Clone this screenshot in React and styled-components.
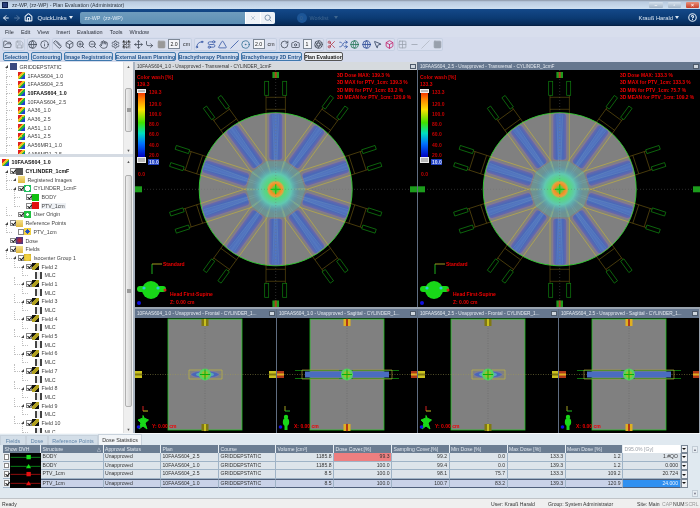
import React from "react";
import styled, { createGlobalStyle } from "styled-components";
import {
  ArrowLeft, ArrowRight, Home, Search, X, HelpCircle, FolderOpen, Save, Info, ZoomIn, ZoomOut, Hand, Settings,
  QrCode, Move, CornerDownRight, Square, Spline, Route, Triangle, Slash, CircleDot, RotateCw, Camera, Ruler,
  Scissors, Shuffle, Globe, Aperture, MousePointer2, Box, Grid2x2, Minus,
} from "lucide-react";

const Global = createGlobalStyle`
  html, body { margin: 0; padding: 0; background: #d5dbec; overflow: hidden; }
  * { box-sizing: border-box; }
`;

const Page = styled.div`
  width: 700px; height: 508px; display: flex; flex-direction: column; overflow: hidden;
  font-family: "Liberation Sans", Arial, sans-serif; font-size: 5.4px; color: #222; background: #d5dbec;
  filter: blur(0.25px);
`;

/* ---------- window chrome ---------- */
const TitleBar = styled.div`
  height: 9px; flex: none; display: flex; align-items: center; padding-left: 2px; gap: 4px;
  background: linear-gradient(#8994a4 0, #b9cbe0 20%, #cfe0f1 100%); color: #2c3540; font-size: 5.2px;
`;
const AppGlyph = styled.span`
  width: 6px; height: 6px; background: #2b3f7a; border: 1px solid #10204a; flex: none;
`;
const TitleText = styled.span` flex: 1; `;
const WinButton = styled.span`
  width: ${p => p.$w}px; height: 6px; margin-right: 1px; border-radius: 1px; display: flex; align-items: center; justify-content: center;
  background: ${p => (p.$close ? "linear-gradient(#e8907a,#c8402a)" : "linear-gradient(#d6e2ee,#a3b5c8)")};
  color: #fff; font-size: 5px; font-weight: bold;
`;
const NavBar = styled.div`
  height: 17px; flex: none; display: flex; align-items: center; color: #e6eef8; font-size: 6px;
  background: linear-gradient(#14498a 0, #0b3a72 55%, #062a58 90%, #041c3e 100%);
`;
const NavIcon = styled.span`
  width: 11.5px; display: flex; justify-content: center; opacity: ${p => p.$dim ? 0.35 : 1};
`;
const QuickLinks = styled.span` margin-left: 3px; width: 42px; white-space: nowrap; `;
const Caret = styled.span`
  display: inline-block; width: 0; height: 0; margin-left: 2px; vertical-align: 1px;
  border-left: 2.5px solid transparent; border-right: 2.5px solid transparent; border-top: 3px solid currentColor;
`;
const SearchField = styled.div`
  width: 195px; height: 12px; display: flex; align-items: center; border-radius: 2px; overflow: hidden;
  background: linear-gradient(#6f9cbd,#5d8fb4); color: #dfeaf3; padding-left: 5px;
`;
const SearchText = styled.span` flex: 1; font-size: 5.4px; white-space: pre; `;
const SearchButton = styled.span`
  width: 15px; height: 12px; background: #eef2f7; display: flex; align-items: center; justify-content: center;
  color: #8298b0; border-left: 1px solid #fff;
`;
const Worklist = styled.div`
  margin-left: 22px; display: flex; align-items: center; gap: 3px; color: #3f668f; flex: 1; font-size: 5.4px;
`;
const Badge = styled.span`
  width: 10px; height: 10px; border-radius: 50%; background: #1c5596; display: flex; align-items: center; justify-content: center; font-size: 5px;
`;
const UserName = styled.span` color: #dbe6f2; font-size: 5.8px; margin-right: 9px; `;
const HelpSlot = styled.span` margin-right: 3px; display: flex; color: #dbe6f2; `;

const MenuBar = styled.div`
  height: 11px; flex: none; display: flex; align-items: center; padding-left: 5px; gap: 7px; background: #d8deed; font-size: 5.5px; color: #2a2f3a;
`;
const ToolBar = styled.div`
  height: 14px; flex: none; display: flex; align-items: center; padding-left: 2px; gap: 2px; background: #d5dbec;
`;
const ToolGroup = styled.div`
  display: flex; align-items: center; height: 13px; border-radius: 2px;
  background: #d9dfef; box-shadow: inset 0 0 0 1px #c6d0e2;
`;
const Tool = styled.span`
  width: 11.5px; display: flex; justify-content: center; color: #3b4350; flex: none;
`;
const ToolInput = styled.span`
  width: ${p => p.$w}px; height: 10px; margin: 0 1px; background: #f4f5f8; border: 1px solid #7d8795; font-size: 5.2px; text-align: center; line-height: 8px; flex: none;
`;
const ToolUnit = styled.span` width: 11px; text-align: center; font-size: 5.2px; flex: none; `;
const TabBar = styled.div`
  height: 11px; flex: none; display: flex; align-items: center; padding-left: 3px; gap: 2px; background: #d5dbec;
`;
const ModeTab = styled.span`
  width: ${p => p.$w}px; height: 9px; display: flex; align-items: center; justify-content: center; white-space: nowrap; border-radius: 2px;
  font-size: 5.2px; font-weight: bold; overflow: hidden;
  color: ${p => p.$on ? "#222" : "#27578f"}; border: 1px solid ${p => p.$on ? "#555" : "#3e78ad"};
  background: ${p => p.$on ? "#eef0f3" : "#cfdcee"};
`;

/* ---------- main ---------- */
const Main = styled.div` height: 371px; flex: none; display: flex; background: #aab4c0; `;
const LeftColumn = styled.div`
  width: 133px; margin-right: 2px; flex: none; display: flex; flex-direction: column; gap: 3px; background: #d5dbe3;
`;
const TreePane = styled.div`
  height: ${p => p.$h}px; flex: none; display: flex; background: #fff; overflow: hidden;
`;
const TreeList = styled.div` flex: 1; padding-top: ${p => p.$top}px; overflow: hidden; min-width: 0; `;
const Row = styled.div`
  height: 8.7px; display: flex; align-items: center; position: relative; white-space: nowrap; font-size: 5.3px;
  padding-left: ${p => 2 + p.$level * 8}px;
  font-weight: ${p => p.$bold ? "bold" : "normal"};
  color: ${p => p.$bold ? "#111" : "#444"};
  &::before {
    content: ${p => p.$level > 0 ? '""' : "none"}; position: absolute; left: ${p => p.$level * 8 - 2}px; top: -3px; width: 5px; height: 7.5px;
    border-left: 1px dotted #c0c0c0; border-bottom: 1px dotted #c0c0c0;
  }
`;
const Exp = styled.span`
  width: 8px; flex: none; display: flex; justify-content: center; position: relative; z-index: 1;
  &::after {
    content: ${p => p.$show ? '""' : "none"}; width: 0; height: 0; border-style: solid;
    border-width: 0 0 3px 3px; border-color: transparent transparent #444 transparent;
  }
`;
const Check = styled.span`
  width: 5.5px; height: 5.5px; margin-right: 0.5px; flex: none; border: 1px solid #888; background: #fff; position: relative; z-index: 1;
  &::after {
    content: ${p => p.$on ? '""' : "none"}; position: absolute; left: 1px; top: -0.5px; width: 2px; height: 3.4px;
    border-right: 1px solid #111; border-bottom: 1px solid #111; transform: rotate(40deg);
  }
`;
const TreeIcon = styled.span`
  width: 7px; height: 7px; margin: 0 0.5px 0 ${p => p.$nudge || 0}px; flex: none; display: block; position: relative; z-index: 1;
  background: ${p => p.$bg};
`;
const Label = styled.span`
  margin-left: 1px; padding: 0 1px;
  background: ${p => p.$hl ? "#eef1f5" : "transparent"};
`;
const ScrollTrack = styled.div`
  width: 10px; flex: none; background: #efefef; border-left: 1px solid #e0e0e0; display: flex; flex-direction: column; align-items: center;
`;
const ScrollArrow = styled.span`
  height: 8px; flex: none; display: flex; align-items: center; justify-content: center; font-size: 4px; color: #555;
`;
const ScrollSpace = styled.div`
  flex: 1; width: 100%; display: flex; flex-direction: column; padding: ${p => p.$pad};
`;
const Thumb = styled.div`
  flex: 1; border: 1px solid #b0b0b0; border-radius: 2px; background: linear-gradient(90deg,#eee,#d4d4d4); display: flex; align-items: center; justify-content: center;
  &::after { content: ""; width: 4px; height: 4px; background: #9a9a9a; }
`;

/* ---------- viewports ---------- */
const Viewer = styled.div`
  width: 565px; flex: none; display: grid; grid-template-columns: 282px 283px; grid-template-rows: 245px 124px; row-gap: 2px; background: #9aa4b0;
`;
const Split = styled.div` display: grid; grid-template-columns: 141px 141px; grid-column: span 1; `;
const Viewport = styled.div`
  display: flex; flex-direction: column; overflow: hidden; min-width: 0; background: #000;
  border-left: ${p => p.$edge ? "1px solid #5f6d80" : "none"};
`;
const ViewHeader = styled.div`
  height: ${p => p.$h}px; flex: none; display: flex; align-items: center; padding: 0 1px 0 2px; white-space: nowrap; font-size: 4.7px;
  background: ${p => p.$on ? "#d6dade" : "#66778f"}; color: ${p => p.$on ? "#333" : "#e4e9f0"};
`;
const ViewTitle = styled.span` flex: 1; overflow: hidden; `;
const ViewMenu = styled.span`
  width: 6px; height: 5px; flex: none; background: #cfd6de; border: 1px solid #4e5a6a;
`;
const Canvas = styled.div` flex: 1; position: relative; overflow: hidden; background: #000; `;
const Drawing = styled.svg` position: absolute; left: 0; top: 0; display: block; `;
const Red = styled.div`
  position: absolute; left: ${p => p.$l ?? 0}px; top: ${p => p.$t ?? 0}px; color: #f00000; font-weight: bold; font-size: 5px; line-height: 7px; white-space: nowrap;
`;
const DoseLines = styled.div`
  position: absolute; left: 202px; top: 2px; color: #f40000; font-weight: bold; font-size: 4.9px; line-height: 7.4px; white-space: nowrap;
`;
const WashPanel = styled.div`
  position: absolute; left: 2px; top: 3.5px; color: #e00000; font-weight: bold; font-size: 5px; line-height: 7px; white-space: nowrap;
`;
const WashScale = styled.div` display: flex; margin-top: 1.5px; `;
const WashBar = styled.div`
  width: 7px; height: 66px; margin: 2px 4px 0 1px; position: relative;
  background: linear-gradient(#f02000 0, #ff8000 12%, #ffe000 28%, #40e000 48%, #00e0c0 64%, #0070ff 80%, #0000c0 100%);
`;
const WashHandle = styled.span`
  position: absolute; left: -1px; width: 9px; height: ${p => p.$h}px; background: #b8b8b8; border: 1px solid #eee;
  ${p => p.$top ? "top: -2px;" : "bottom: -6px;"}
`;
const WashLabels = styled.div` display: flex; flex-direction: column; `;
const WashLabel = styled.span`
  height: ${p => p.$h}px; line-height: 7px; color: #c80000;
`;
const WashLow = styled.span`
  width: 11px; height: 6px; line-height: 6px; margin: 1px 0 0 -1px; background: #2040c0; color: #d8e0ff; padding-left: 1px;
`;
const WashZero = styled.div` margin-top: 6px; margin-left: 1px; color: #c80000; `;

/* ---------- bottom ---------- */
const Bottom = styled.div`
  height: 65px; flex: none; display: flex; flex-direction: column; background: #e0e9f0; border-top: 1px solid #f6f8fa;
`;
const LowerTabs = styled.div` height: 11px; flex: none; display: flex; align-items: flex-end; `;
const LowerTab = styled.span`
  width: ${p => p.$w}px; height: ${p => p.$on ? 11 : 10}px; display: flex; align-items: center; justify-content: center; font-size: 5.4px; white-space: nowrap;
  color: ${p => p.$on ? "#333" : "#5f84a8"}; background: ${p => p.$on ? "#f2f5f8" : "#d3deE8"}; border: 1px solid #c8d2dc; border-bottom: none;
`;
const TableZone = styled.div` flex: 1; display: flex; padding-left: 3px; min-height: 0; `;
const Table = styled.div`
  width: 684px; flex: none; align-self: flex-start; display: grid;
  grid-template-columns: 7px 31px 62.5px 57.5px 58px 57px 58px 58px 57.5px 58px 58px 57.5px 57.5px 7px;
  grid-template-rows: 8px repeat(4, 8.7px);
`;
const Head = styled.div`
  grid-column: span ${p => p.$span || 1}; background: ${p => p.$light ? "#fff" : "#6b7d92"}; color: ${p => p.$light ? "#9aa0a8" : "#dfe6ee"};
  border-right: 1px solid #e6edf3; padding: 0 1.5px; font-size: 5.1px; line-height: 8px; white-space: nowrap; overflow: hidden;
  display: flex; justify-content: space-between; align-items: center;
`;
const Cell = styled.div`
  background: ${p => p.$bg || (p.$sel ? "#c9d2e8" : "#dde4ea")}; color: ${p => p.$fg || "#333"};
  border-right: 1px solid #9fb3c6; border-bottom: ${p => p.$sel ? "1px solid #4f5f7a" : "1px solid #9fb3c6"};
  border-top: ${p => p.$sel ? "1px solid #4f5f7a" : "none"};
  padding: 0 1.5px; font-size: 5.1px; line-height: 7.5px; white-space: nowrap; overflow: hidden; text-align: ${p => p.$right ? "right" : "left"};
`;
const BoxCell = styled.div`
  background: #e8edf2; display: flex; align-items: center; justify-content: center; border-bottom: 1px solid #9fb3c6;
`;
const DvhCell = styled.div` background: #000; display: flex; `;
const DropCell = styled.div`
  background: #f0f2f5; border: 1px solid #7a8796; display: flex; align-items: center; justify-content: center;
  &::after { content: ""; width: 0; height: 0; border-left: 2px solid transparent; border-right: 2px solid transparent; border-top: 2px solid #111; }
`;
const SideScroll = styled.div`
  width: 10px; margin-left: 3px; flex: none; display: flex; flex-direction: column; justify-content: space-between; align-items: center; padding: 1px 0 1px;
`;
const SideArrow = styled.span`
  width: 6px; height: 7px; border: 1px solid #c3cdd6; background: #e8eef3; font-size: 4px; color: #778; display: flex; align-items: center; justify-content: center;
`;
const StatusBar = styled.div`
  height: 10px; flex: none; display: flex; align-items: center; padding-left: 2px; background: #efefef; border-top: 1px solid #c0c4c8; font-size: 5.1px; color: #333;
`;
const StatusItem = styled.span`
  width: ${p => p.$w}px; flex: none; white-space: nowrap; color: ${p => p.$dim ? "#999" : "#333"};
`;

/* ---------- drawings ---------- */
const ANGLES = [0, 36, 72, 108, 144, 180, 216, 252, 288, 324];

function Transversal({ cx, cy, id }) {
  return (
    <Drawing width="283" height="237" viewBox="0 0 283 237">
      <defs>
        <radialGradient id={`hot${id}`}>
          <stop offset="0" stopColor="#30d040" />
          <stop offset="0.13" stopColor="#80c040" />
          <stop offset="0.2" stopColor="#f09020" />
          <stop offset="0.3" stopColor="#e8a040" />
          <stop offset="0.38" stopColor="#58d878" />
          <stop offset="0.65" stopColor="#60c8b0" />
          <stop offset="1" stopColor="#5090c0" stopOpacity="0" />
        </radialGradient>
        <linearGradient id={`beam${id}`} x1="0" x2="1" y1="0" y2="0">
          <stop offset="0" stopColor="#6a68a8" />
          <stop offset="0.25" stopColor="#4a68b8" />
          <stop offset="0.5" stopColor="#5478c0" />
          <stop offset="0.75" stopColor="#4a68b8" />
          <stop offset="1" stopColor="#6a68a8" />
        </linearGradient>
      </defs>
      <circle cx={cx} cy={cy} r="76.5" fill="#808080" stroke="#30d030" strokeWidth="0.9" />
      {ANGLES.map(a => (
        <g key={a} transform={`rotate(${a} ${cx} ${cy})`}>
          <path d={`M${cx - 9.5} ${cy - 28} L${cx} ${cy} L${cx + 9.5} ${cy - 28} Z`} fill="#50b0b0" opacity="0.4" />
          <rect x={cx - 7.5} y={cy - 76} width="15" height="47" rx="3.5" fill="#857a90" />
          <rect x={cx - 6.5} y={cy - 75.5} width="13" height="46" rx="3" fill={`url(#beam${id})`} />
          <path d={`M${cx - 3} ${cy - 75} L${cx} ${cy} M${cx + 3} ${cy - 75} L${cx} ${cy}`} stroke="#90c8c8" strokeWidth="0.35" opacity="0.45" />
          <path d={`M${cx - 9.7} ${cy - 28} L${cx + 2} ${cy + 6} M${cx + 9.7} ${cy - 28} L${cx - 2} ${cy + 6}`} stroke="#d8d868" strokeWidth="0.45" opacity="0.6" />
          <path d={`M${cx - 9.7} ${cy - 76} V${cy - 28} M${cx + 9.7} ${cy - 76} V${cy - 28}`} stroke="#b8aa48" strokeWidth="0.7" />
          <path d={`M${cx - 9.7} ${cy - 94} V${cy - 76} M${cx + 9.7} ${cy - 94} V${cy - 76} M${cx - 9.7} ${cy - 92} H${cx + 9.7} M${cx - 9.7} ${cy - 80} H${cx + 9.7}`} stroke="#6a5610" strokeWidth="0.6" fill="none" />
          <rect x={cx - 11} y={cy - 108} width="4" height="14" fill="none" stroke="#0f800f" strokeWidth="0.7" />
          <rect x={cx + 7} y={cy - 108} width="4" height="14" fill="none" stroke="#0f800f" strokeWidth="0.7" />
        </g>
      ))}
      <circle cx={cx} cy={cy} r="24" fill={`url(#hot${id})`} />
      <path d={`M${cx - 5} ${cy} H${cx + 5} M${cx} ${cy - 5} V${cy + 5}`} stroke="#10d010" strokeWidth="1.2" />
      <path d={`M0 ${cy} H283 M${cx} 0 V237`} stroke="#707070" strokeWidth="0.5" strokeDasharray="1 2" opacity="0.8" />
      <rect x={cx - 3.3} y="2" width="6.6" height="6" fill="#1c9c1c" />
      <rect x={cx - 1} y="2" width="2" height="6" fill="#b04020" />
      <rect x={cx - 3.3} y="230.5" width="6.6" height="6.5" fill="#1c9c1c" />
      <rect x={cx - 1} y="230.5" width="2" height="6.5" fill="#b04020" />
      <rect x="0" y={cy - 3} width="7" height="6" fill="#1c9c1c" />
      <rect x="275" y={cy - 3} width="7" height="6" fill="#1c9c1c" />
      <path d="M17 204 V194" fill="none" strokeWidth="1" stroke="#1cae1c" />
      <path d="M17 194 H27" stroke="#a09820" strokeWidth="1" />
      <rect x="2" y="216" width="29" height="6" rx="3" fill="#18d818" />
      <circle cx="16" cy="220" r="9" fill="#18d818" />
      <circle cx="9" cy="218" r="1.6" fill="#30c8d8" />
      <circle cx="23" cy="218" r="1.6" fill="#30c8d8" />
      <circle cx="30" cy="220" r="1.5" fill="#d02020" />
      <circle cx="4" cy="233" r="2" fill="#1010e0" />
    </Drawing>
  );
}

function Marker({ x, y, w, h, color, stripe, vertical }) {
  return (
    <g>
      <rect x={x} y={y} width={w} height={h} fill={color} />
      {vertical
        ? <rect x={x + w / 2 - 1} y={y} width="2" height={h} fill={stripe} />
        : <rect x={x} y={y + h / 2 - 1} width={w} height="2" fill={stripe} />}
    </g>
  );
}

function Projection({ view }) {
  const cx = 70;
  const cy = 56.5;
  const frontal = view === "Frontal";
  const main = frontal ? "#c8c020" : "#b03818";
  const alt = frontal ? "#807810" : "#e0b020";
  return (
    <Drawing width="141" height="114" viewBox="0 0 141 114">
      <rect x={cx - 37} y="1" width="74" height="111" fill="#808080" stroke="#20c020" strokeWidth="0.8" />
      <path d={`M0 ${cy} H141`} stroke="#a09a50" strokeWidth="0.5" strokeDasharray="1 1.5" />
      <path d={`M${cx} 0 V114`} stroke="#606060" strokeWidth="0.5" strokeDasharray="1 1.5" />
      {frontal ? (
        <g>
          <ellipse cx={cx} cy={cy} rx="14" ry="3.5" fill="#4a66b8" stroke="#8a80a8" strokeWidth="0.6" />
          <ellipse cx={cx} cy={cy} rx="9" ry="2.4" fill="#58a8b8" />
          <path d={`M${cx - 4} ${cy - 4.5} H${cx - 16} V${cy + 4.5} H${cx - 4} M${cx + 4} ${cy - 4.5} H${cx + 17} V${cy + 4.5} H${cx + 4}`} fill="none" stroke="#c0b840" strokeWidth="0.7" />
        </g>
      ) : (
        <g>
          <rect x={cx - 42} y={cy - 3} width="84" height="6" fill="#4a6cc0" />
          <path d={`M${cx - 52} ${cy - 4} H${cx + 52} M${cx - 52} ${cy + 4} H${cx + 52}`} stroke="#109010" strokeWidth="0.8" />
          <path d={`M${cx - 8} ${cy - 4.5} H${cx - 45} V${cy + 4.5} H${cx - 8} M${cx + 6} ${cy - 4.5} H${cx + 45} V${cy + 4.5} H${cx + 6}`} fill="none" stroke="#a89a38" strokeWidth="0.7" />
        </g>
      )}
      <circle cx={cx} cy={cy} r="6" fill="#58d060" />
      <circle cx={cx} cy={cy} r="3.4" fill="#98c030" />
      <path d={`M${cx - 5} ${cy} H${cx + 5} M${cx} ${cy - 5} V${cy + 5}`} stroke="#08b008" strokeWidth="1" />
      <Marker x={cx - 3.5} y="1" w={7} h={7} color={alt} stripe={main} vertical />
      <Marker x={cx - 3.5} y="106" w={7} h={7} color={alt} stripe={main} vertical />
      <Marker x="0" y={cy - 3.5} w={7} h={7} color={main} stripe={alt} />
      <Marker x="134" y={cy - 3.5} w={7} h={7} color={main} stripe={alt} />
      <path d="M8 88 V93" stroke={frontal ? "#d02020" : "#a0a020"} strokeWidth="1" />
      <path d="M8 93 H13" stroke={frontal ? "#c8c020" : "#20c020"} strokeWidth="1" />
      {frontal ? (
        <path d="M8 97.5 L8 100 L3 102 L6 105 L4 111 L8 108 L12 111 L10 105 L13.5 102 L9 100 Z" fill="#18d818" stroke="#18d818" />
      ) : (
        <g>
          <circle cx="9" cy="99" r="2.2" fill="#18d818" />
          <ellipse cx="9" cy="104" rx="3.2" ry="4" fill="#18d818" />
          <rect x="7.5" y="106" width="3" height="6" fill="#18d818" />
        </g>
      )}
      <circle cx="3.5" cy="109" r="1.8" fill="#1010e0" />
    </Drawing>
  );
}

function Dvh({ color, shape }) {
  const mark = color === "#0a8f1a" ? "#18e018" : "#e81010";
  return (
    <svg width="31" height="8.7" viewBox="0 0 31 9">
      <path d="M0 4.5 H31" stroke={color} strokeWidth="0.9" />
      {shape === "s"
        ? <rect x="16.5" y="2" width="4.5" height="4.5" fill={mark} />
        : <path d="M18.7 2 L21.3 6.5 H16 Z" fill={mark} />}
    </svg>
  );
}

/* ---------- data ---------- */
const planBg = "linear-gradient(135deg,#e02020 0 30%,#f0c020 30% 50%,#20b040 50% 70%,#2040d0 70%)";
const fieldBg = "linear-gradient(135deg,#111 0 30%,#b0a020 30% 70%,#111 70%)";
const mlcBg = "linear-gradient(90deg,#444 0 25%,#eee 25% 75%,#444 75%)";
const folderBg = "linear-gradient(#f4e08a,#e0b840)";
const PLANS = ["1FAAS604_1.0", "1FAAS604_2.5", "10FAAS604_1.0", "10FAAS604_2.5", "AA36_1.0", "AA36_2.5", "AA51_1.0", "AA51_2.5", "AA56MR1_1.0", "AA56MR1_2.5"];

const fieldRows = [2, 1, 3, 4, 5, 6, 7, 8, 9, 10].flatMap(n => [
  { level: 2, exp: true, check: true, bg: fieldBg, label: `Field ${n}` },
  { level: 3, bg: mlcBg, label: "MLC" },
]);

const TREE = [
  { level: 0, exp: true, check: true, bg: "#555", label: "CYLINDER_1cmF", bold: true },
  { level: 1, exp: true, bg: folderBg, label: "Registered Images" },
  { level: 1, exp: true, check: true, bg: "radial-gradient(circle,#fff 45%,#20c060 50%)", label: "CYLINDER_1cmF" },
  { level: 2, check: true, bg: "#10c010", label: "BODY" },
  { level: 2, check: true, bg: "#e01010", label: "PTV_1cm", hl: true },
  { level: 1, check: true, bg: "radial-gradient(circle,#fff 25%,#20c040 30%)", label: "User Origin" },
  { level: 0, exp: true, check: true, bg: folderBg, label: "Reference Points" },
  { level: 1, empty: true, bg: "radial-gradient(circle,#2050c0 40%,#f0d040 45%)", label: "PTV_1cm" },
  { level: 0, exp: false, check: true, bg: "radial-gradient(circle,#d02020,#2040a0)", label: "Dose" },
  { level: 0, exp: true, check: true, bg: folderBg, label: "Fields" },
  { level: 1, exp: true, check: true, bg: "radial-gradient(circle,#f0d040 50%,#c0a020)", label: "Isocenter Group 1" },
  ...fieldRows,
];

const TABLE = [
  { s: "BODY", p: "10FAAS604_2.5", v: "1185.8", c: "99.3", sc: "99.2", min: "0.0", max: "133.3", mean: "1.2", d: "1.#QO", color: "#0a8f1a", shape: "s", red: true },
  { s: "BODY", p: "10FAAS604_1.0", v: "1185.8", c: "100.0", sc: "99.4", min: "0.0", max: "139.3", mean: "1.2", d: "0.000", color: "#0a8f1a", shape: "t" },
  { s: "PTV_1cm", p: "10FAAS604_2.5", v: "8.5", c: "100.0", sc: "98.1", min: "75.7", max: "133.3", mean: "109.2", d: "20.724", color: "#a81010", shape: "s", on: true },
  { s: "PTV_1cm", p: "10FAAS604_1.0", v: "8.5", c: "100.0", sc: "100.7", min: "83.2", max: "139.3", mean: "120.9", d: "24.000", color: "#a81010", shape: "t", on: true, sel: true },
];

const WASH = [["139.3", 12], ["120.0", 10], ["100.0", 10], ["80.0", 10], ["60.0", 10.5], ["40.0", 10], ["20.0", 6]];

const i = 9;
const TOOL_GROUPS = [
  [<FolderOpen size={i} />, <Save size={i} color="#9aa2ae" />],
  [<Globe size={i} />, <Info size={i} />],
  [<Ruler size={i} />, <Box size={i} />, <ZoomIn size={i} />, <ZoomOut size={i} />, <Hand size={i} />, <Settings size={i} />, <QrCode size={i} color="#111" />, <Move size={i} />, <CornerDownRight size={i} />, <Square size={i} fill="#999" color="#999" />, "in", "cm"],
  [<Spline size={i} color="#2a4ea0" />, <Route size={i} color="#2a4ea0" />, <Triangle size={i} color="#2a4ea0" />, <Slash size={i} color="#2a4ea0" />, <CircleDot size={i} color="#2a6a90" />, "in", "cm"],
  [<RotateCw size={i} />, <Camera size={i} />, "one", <Aperture size={i} />],
  [<Scissors size={i} color="#b03040" />, <Shuffle size={i} color="#2a4ea0" />, <Globe size={i} color="#1a7050" />, <Globe size={i} color="#204090" />, <MousePointer2 size={i} color="#203050" />, <Box size={i} color="#c01060" />],
  [<Grid2x2 size={i} color="#98a0ac" />, <Minus size={i} color="#98a0ac" />, <Slash size={i} color="#b0b6c0" />, <Square size={i} fill="#98a0ac" color="#98a0ac" />],
];

const MODES = [["Selection", 26], ["Contouring", 31], ["Image Registration", 49], ["External Beam Planning", 61], ["Brachytherapy Planning", 61], ["Brachytherapy 2D Entry", 61], ["Plan Evaluation", 39, true]];

function TreeRow({ r }) {
  return (
    <Row $level={r.level} $bold={r.bold}>
      <Exp $show={r.exp} />
      {(r.check || r.empty) && <Check $on={r.check} />}
      <TreeIcon $bg={r.bg} $nudge={r.level === 3 ? 1 : 0} />
      <Label $hl={r.hl}>{r.label}</Label>
    </Row>
  );
}

function VScroll({ pad }) {
  return (
    <ScrollTrack>
      <ScrollArrow>▲</ScrollArrow>
      <ScrollSpace $pad={pad}><Thumb /></ScrollSpace>
      <ScrollArrow>▼</ScrollArrow>
    </ScrollTrack>
  );
}

function BigView({ title, on, edge, cx, id, stats }) {
  return (
    <Viewport $edge={edge}>
      <ViewHeader $h={8} $on={on}><ViewTitle>{title}</ViewTitle><ViewMenu /></ViewHeader>
      <Canvas>
        <Transversal cx={cx} cy={119.3} id={id} />
        <WashPanel>
          Color wash [%]
          <div>{stats.top}</div>
          <WashScale>
            <WashBar><WashHandle $top $h={4} /><WashHandle $h={6} /></WashBar>
            <WashLabels>
              {WASH.map(([t, h], n) => <WashLabel key={n} $h={h}>{n === 0 ? stats.top : t}</WashLabel>)}
              <WashLow>10.0</WashLow>
            </WashLabels>
          </WashScale>
          <WashZero>0.0</WashZero>
        </WashPanel>
        <DoseLines>
          <div>3D Dose MAX: {stats.max} %</div>
          <div>3D MAX for PTV_1cm: {stats.max} %</div>
          <div>3D MIN for PTV_1cm: {stats.min} %</div>
          <div>3D MEAN for PTV_1cm: {stats.mean} %</div>
        </DoseLines>
        <Red $l={28} $t={191}>Standard</Red>
        <Red $l={35} $t={221}>Head First-Supine</Red>
        <Red $l={35} $t={228.5}>Z: 0.00 cm</Red>
      </Canvas>
    </Viewport>
  );
}

function SmallView({ plan, view, edge }) {
  return (
    <Viewport $edge={edge}>
      <ViewHeader $h={9}><ViewTitle>{plan} - Unapproved - {view} - CYLINDER_1...</ViewTitle><ViewMenu /></ViewHeader>
      <Canvas>
        <Projection view={view} />
        <Red $l={17} $t={105}>{view === "Frontal" ? "Y" : "X"}: 0.00 cm</Red>
      </Canvas>
    </Viewport>
  );
}

export default function App() {
  return (
    <Page>
      <Global />
      <TitleBar>
        <AppGlyph />
        <TitleText>zz-WP, (zz-WP) - Plan Evaluation (Administrator)</TitleText>
        <WinButton $w={14}>–</WinButton>
        <WinButton $w={13}>▫</WinButton>
        <WinButton $w={13} $close>×</WinButton>
      </TitleBar>
      <NavBar>
        <NavIcon><ArrowLeft size={8} strokeWidth={3} /></NavIcon>
        <NavIcon $dim><ArrowRight size={8} strokeWidth={3} /></NavIcon>
        <NavIcon><Home size={9} strokeWidth={3} /></NavIcon>
        <QuickLinks>QuickLinks<Caret /></QuickLinks>
        <SearchField>
          <SearchText>zz-WP  (zz-WP)</SearchText>
          <SearchButton><X size={6} /></SearchButton>
          <SearchButton><Search size={8} strokeWidth={3} /></SearchButton>
        </SearchField>
        <Worklist><Badge>0</Badge>Worklist<Caret /></Worklist>
        <UserName>Krauß Harald<Caret /></UserName>
        <HelpSlot><HelpCircle size={9} strokeWidth={3} /></HelpSlot>
      </NavBar>
      <MenuBar>
        {["File", "Edit", "View", "Insert", "Evaluation", "Tools", "Window"].map(m => <span key={m}>{m}</span>)}
      </MenuBar>
      <ToolBar>
        {TOOL_GROUPS.map((g, n) => (
          <ToolGroup key={n}>
            {g.map((t, k) =>
              t === "in" ? <ToolInput key={k} $w={12}>2.0</ToolInput>
                : t === "one" ? <ToolInput key={k} $w={9}>1</ToolInput>
                  : t === "cm" ? <ToolUnit key={k}>cm</ToolUnit>
                    : <Tool key={k}>{t}</Tool>
            )}
          </ToolGroup>
        ))}
      </ToolBar>
      <TabBar>
        {MODES.map(([t, w, on]) => <ModeTab key={t} $w={w} $on={on}>{t}</ModeTab>)}
      </TabBar>
      <Main>
        <LeftColumn>
          <TreePane $h={92}>
            <TreeList $top={0.5}>
              <Row $level={0}><Exp $show /><TreeIcon $bg="#3a4a80" /><Label>GRIDDEPSTATIC</Label></Row>
              {PLANS.map((p, n) => (
                <Row key={p} $level={1} $bold={n === 2}><Exp /><TreeIcon $bg={planBg} /><Label>{p}</Label></Row>
              ))}
            </TreeList>
            <VScroll pad="18px 1px 14px" />
          </TreePane>
          <TreePane $h={276}>
            <TreeList $top={1}>
              <Row $level={0} $bold><TreeIcon $bg={planBg} /><Label>10FAAS604_1.0</Label></Row>
              {TREE.map((r, n) => <TreeRow key={n} r={r} />)}
            </TreeList>
            <VScroll pad="10px 1px 18px" />
          </TreePane>
        </LeftColumn>
        <Viewer>
          <BigView title="10FAAS604_1.0 - Unapproved - Transversal - CYLINDER_1cmF" on cx={140.7} id="a"
            stats={{ top: "139.3", max: "139.3", min: "83.2", mean: "120.9" }} />
          <BigView title="10FAAS604_2.5 - Unapproved - Transversal - CYLINDER_1cmF" edge cx={141.7} id="b"
            stats={{ top: "133.3", max: "133.3", min: "75.7", mean: "109.2" }} />
          <Split>
            <SmallView plan="10FAAS604_1.0" view="Frontal" />
            <SmallView plan="10FAAS604_1.0" view="Sagittal" edge />
          </Split>
          <Split>
            <SmallView plan="10FAAS604_2.5" view="Frontal" edge />
            <SmallView plan="10FAAS604_2.5" view="Sagittal" edge />
          </Split>
        </Viewer>
      </Main>
      <Bottom>
        <LowerTabs>
          <LowerTab $w={26}>Fields</LowerTab>
          <LowerTab $w={22}>Dose</LowerTab>
          <LowerTab $w={50}>Reference Points</LowerTab>
          <LowerTab $w={44} $on>Dose Statistics</LowerTab>
        </LowerTabs>
        <TableZone>
          <Table>
            <Head $span={2}>Show DVH</Head>
            <Head>Structure<span>△</span></Head>
            <Head>Approval Status</Head>
            <Head>Plan</Head>
            <Head>Course</Head>
            <Head>Volume [cm³]</Head>
            <Head>Dose Cover.[%]</Head>
            <Head>Sampling Cover.[%]</Head>
            <Head>Min Dose [%]</Head>
            <Head>Max Dose [%]</Head>
            <Head>Mean Dose [%]</Head>
            <Head $light>D95.0% [Gy]</Head>
            <DropCell />
            {TABLE.map((r, n) => (
              <React.Fragment key={n}>
                <BoxCell><Check $on={r.on} /></BoxCell>
                <DvhCell><Dvh color={r.color} shape={r.shape} /></DvhCell>
                <Cell $sel={r.sel}>{r.s}</Cell>
                <Cell $sel={r.sel}>Unapproved</Cell>
                <Cell $sel={r.sel}>{r.p}</Cell>
                <Cell $sel={r.sel}>GRIDDEPSTATIC</Cell>
                <Cell $sel={r.sel} $right>{r.v}</Cell>
                <Cell $sel={r.sel} $right $bg={r.red ? "#ee7f80" : undefined}>{r.c}</Cell>
                <Cell $sel={r.sel} $right>{r.sc}</Cell>
                <Cell $sel={r.sel} $right>{r.min}</Cell>
                <Cell $sel={r.sel} $right>{r.max}</Cell>
                <Cell $sel={r.sel} $right>{r.mean}</Cell>
                <Cell $sel={r.sel} $right $bg={r.sel ? "#3090f0" : undefined} $fg={r.sel ? "#e8f2ff" : undefined}>{r.d}</Cell>
                <DropCell />
              </React.Fragment>
            ))}
          </Table>
          <SideScroll><SideArrow>▲</SideArrow><SideArrow>▼</SideArrow></SideScroll>
        </TableZone>
      </Bottom>
      <StatusBar>
        <StatusItem $w={489}>Ready</StatusItem>
        <StatusItem $w={57}>User: Krauß Harald</StatusItem>
        <StatusItem $w={89}>Group: System Administrator</StatusItem>
        <StatusItem $w={25}>Site: Main</StatusItem>
        <StatusItem $w={11} $dim>CAP</StatusItem>
        <StatusItem $w={12}>NUM</StatusItem>
        <StatusItem $w={14} $dim>SCRL</StatusItem>
      </StatusBar>
    </Page>
  );
}
